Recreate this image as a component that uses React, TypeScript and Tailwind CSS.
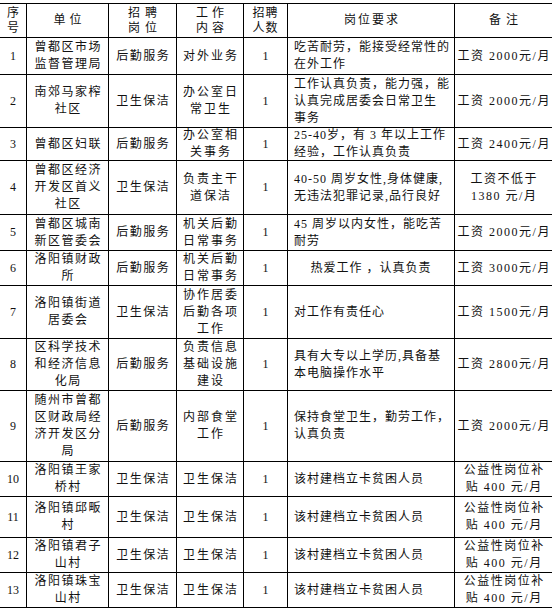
import React from "react";

type Row = {
  h: string;
  no: string;
  unit: string[];
  post: string;
  work: string[];
  req: string[];
  reqCenter?: boolean;
  note: string[];
};

const rows: Row[] = [
  { h: "h-[37px]", no: "1", unit: ["曾都区市场", "监督管理局"], post: "后勤服务", work: ["对外业务"], req: ["吃苦耐劳，能接受经常性的", "在外工作"], note: ["工资 2000元/月"] },
  { h: "h-[53px]", no: "2", unit: ["南郊马家榨", "社区"], post: "卫生保洁", work: ["办公室日", "常卫生"], req: ["工作认真负责，能力强，能", "认真完成居委会日常卫生", "事务"], note: ["工资 2000元/月"] },
  { h: "h-[33px]", no: "3", unit: ["曾都区妇联"], post: "后勤服务", work: ["办公室相", "关事务"], req: ["25-40岁，有 3 年以上工作", "经验，工作认真负责"], note: ["工资 2400元/月"] },
  { h: "h-[54px]", no: "4", unit: ["曾都区经济", "开发区首义", "社区"], post: "卫生保洁", work: ["负责主干", "道保洁"], req: ["40-50 周岁女性,身体健康,", "无违法犯罪记录,品行良好"], note: ["工资不低于", "1380 元/月"] },
  { h: "h-[36px]", no: "5", unit: ["曾都区城南", "新区管委会"], post: "后勤服务", work: ["机关后勤", "日常事务"], req: ["45 周岁以内女性，能吃苦", "耐劳"], note: ["工资 2000元/月"] },
  { h: "h-[35px]", no: "6", unit: ["洛阳镇财政", "所"], post: "后勤服务", work: ["机关后勤", "日常事务"], req: ["热爱工作 ，认真负责"], reqCenter: true, note: ["工资 3000元/月"] },
  { h: "h-[53px]", no: "7", unit: ["洛阳镇街道", "居委会"], post: "卫生保洁", work: ["协作居委", "后勤各项", "工作"], req: ["对工作有责任心"], note: ["工资 1500元/月"] },
  { h: "h-[52px]", no: "8", unit: ["区科学技术", "和经济信息", "化局"], post: "后勤服务", work: ["负责信息", "基础设施", "建设"], req: ["具有大专以上学历,具备基", "本电脑操作水平"], note: ["工资 2800元/月"] },
  { h: "h-[71px]", no: "9", unit: ["随州市曾都", "区财政局经", "济开发区分", "局"], post: "后勤服务", work: ["内部食堂", "工作"], req: ["保持食堂卫生，勤劳工作，", "认真负责"], note: ["工资 2000元/月"] },
  { h: "h-[35px]", no: "10", unit: ["洛阳镇王家", "桥村"], post: "卫生保洁", work: ["卫生保洁"], req: ["该村建档立卡贫困人员"], note: ["公益性岗位补", "贴 400 元/月"] },
  { h: "h-[41px]", no: "11", unit: ["洛阳镇邱畈", "村"], post: "卫生保洁", work: ["卫生保洁"], req: ["该村建档立卡贫困人员"], note: ["公益性岗位补", "贴 400 元/月"] },
  { h: "h-[35px]", no: "12", unit: ["洛阳镇君子", "山村"], post: "卫生保洁", work: ["卫生保洁"], req: ["该村建档立卡贫困人员"], note: ["公益性岗位补", "贴 400 元/月"] },
  { h: "h-[35px]", no: "13", unit: ["洛阳镇珠宝", "山村"], post: "卫生保洁", work: ["卫生保洁"], req: ["该村建档立卡贫困人员"], note: ["公益性岗位补", "贴 400 元/月"] },
];

function Lines({ lines, className }: { lines: string[]; className?: string }) {
  return (
    <div className={className}>
      {lines.map((l, i) => (
        <div key={i} className="whitespace-pre">
          {l}
        </div>
      ))}
    </div>
  );
}

const cell = "flex items-center justify-center text-center overflow-hidden";

export default function App() {
  return (
    <div className="w-[557px] h-[614px] bg-white text-[#111] font-['Liberation_Serif','Noto_Sans_CJK_SC',serif] text-[12px] pt-[3px]">
      <div className="w-[552px] border-b border-black">
        {/* header */}
        <div className="flex h-[34px] border-t border-black leading-[15px]">
          <div className={`${cell} w-[26px]`}>
            <Lines lines={["序", "号"]} />
          </div>
          <div className={`${cell} w-[82px] border-l border-black tracking-[4px]`}>
            <span className="mr-[-4px]">单位</span>
          </div>
          <div className={`${cell} w-[68px] border-l border-black tracking-[5px]`}>
            <Lines lines={["招聘", "岗位"]} className="mr-[-5px]" />
          </div>
          <div className={`${cell} w-[67px] border-l border-black tracking-[4px]`}>
            <Lines lines={["工作", "内容"]} className="mr-[-4px]" />
          </div>
          <div className={`${cell} w-[44px] border-l border-black tracking-[1px]`}>
            <Lines lines={["招聘", "人数"]} />
          </div>
          <div className={`${cell} w-[167px] border-l border-black tracking-[2px]`}>
            <span className="mr-[-2px]">岗位要求</span>
          </div>
          <div className={`${cell} w-[98px] border-l border-black tracking-[5px]`}>
            <span className="mr-[-5px]">备注</span>
          </div>
        </div>
        {rows.map((r) => (
          <div key={r.no} className={`flex ${r.h} border-t border-black leading-[17px]`}>
            <div className={`${cell} w-[26px]`}>{r.no}</div>
            <div className={`${cell} w-[82px] border-l border-black tracking-[1.5px]`}>
              <Lines lines={r.unit} className="mr-[-1.5px]" />
            </div>
            <div className={`${cell} w-[68px] border-l border-black tracking-[1.5px]`}>
              <span className="mr-[-1.5px]">{r.post}</span>
            </div>
            <div className={`${cell} w-[67px] border-l border-black tracking-[2px]`}>
              <Lines lines={r.work} className="mr-[-2px]" />
            </div>
            <div className={`${cell} w-[44px] border-l border-black`}>1</div>
            <div
              className={
                r.reqCenter
                  ? `${cell} w-[167px] border-l border-black tracking-[1px]`
                  : "flex items-center justify-start text-left overflow-hidden w-[167px] border-l border-black pl-[6px] tracking-[1px]"
              }
            >
              <Lines lines={r.req} />
            </div>
            <div className={`${cell} w-[98px] border-l border-black tracking-[1.5px]`}>
              <Lines lines={r.note} className="mr-[-1.5px]" />
            </div>
          </div>
        ))}
      </div>
    </div>
  );
}
